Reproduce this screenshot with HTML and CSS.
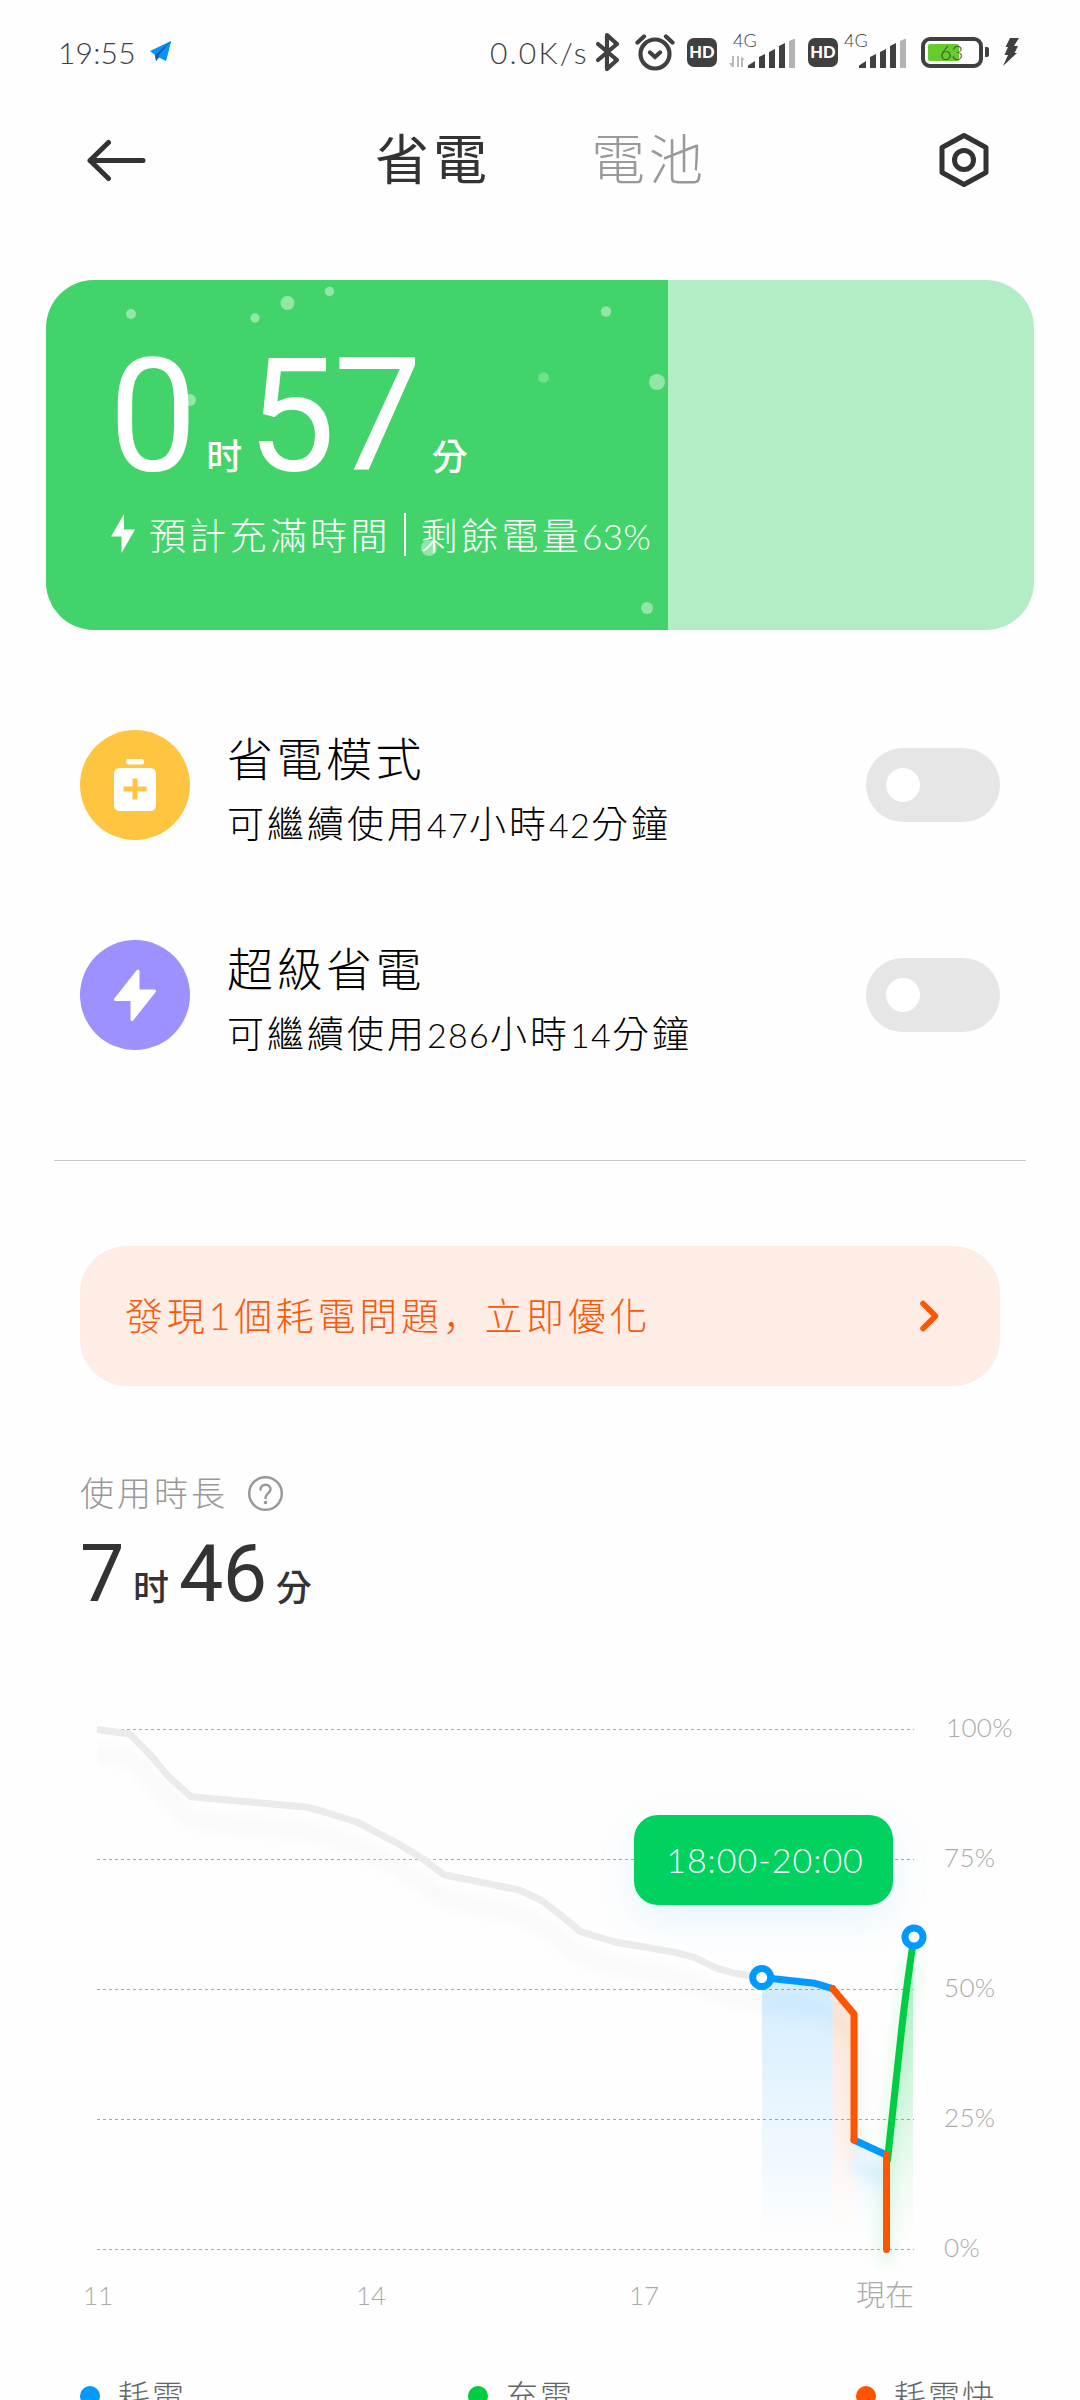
FILE: index.html
```html
<!DOCTYPE html>
<html lang="zh-Hant">
<head>
    <meta charset="UTF-8">
    <meta name="viewport" content="width=device-width, initial-scale=1.0">
    <title>省電</title>
    <link rel="stylesheet" href="styles.css">
</head>
<body>
    <div class="status-bar">
        <span class="clock">19:55</span>
        <svg class="telegram" width="22" height="22" viewBox="0 0 22 22">
            <path d="M21 0L0 10l5 4 1 6 3-3.500 7 3.500z" fill="#0a93f5"/>
            <path d="M21 0L5 14l1 6 3-4z" fill="#0a5fb8"/>
            <path d="M21 0L8.500 14.500l7.500 5z" fill="#0a93f5"/>
        </svg>
        <span class="speed">0.0K/s</span>
        <svg class="bluetooth" width="26" height="40" viewBox="0 0 26 40" fill="none" stroke="#404040" stroke-width="4.200" stroke-linejoin="round" stroke-linecap="round">
            <path d="M3 12l19 16-10 9V3l10 9L3 28"/>
        </svg>
        <svg class="alarm" width="40" height="40" viewBox="0 0 40 40" fill="none" stroke="#404040" stroke-width="4.200" stroke-linecap="round">
            <circle cx="20" cy="22" r="14.500"/>
            <path d="M15 20.500l5 4.500 5-4.500M2.500 10.500l6.500-6M37.500 10.500l-6.500-6"/>
        </svg>
        <span class="hd">HD</span>
        <svg class="signal" width="68" height="52" viewBox="0 -8 68 52">
            <text x="4" y="13" class="net">4G</text>
            <path d="M5 22v11H3l-3-4h3v-7zM8 22v11h2V22zM12 33V22l4 4h-2v7z" fill="#bbb"/>
            <path d="M19 31.500l7-4.500v7h-7zM30 23l6-3v14h-6zM40 18l6-3v19h-6zM50 12l6-3v25h-6z" fill="#404040"/>
            <path d="M60 7l6-2.500V34h-6z" fill="#b3b3b3"/>
        </svg>
        <span class="hd hd-second">HD</span>
        <svg class="signal signal-second" width="66" height="52" viewBox="0 -8 66 52">
            <text x="1" y="13" class="net">4G</text>
            <path d="M16 31.500l7-4.500v7h-7zM27 23l6-3v14h-6zM37 18l6-3v19h-6zM47 12l6-3v25h-6z" fill="#404040"/>
            <path d="M57 7l6-2.500V34h-6z" fill="#b3b3b3"/>
        </svg>
        <div class="battery"><div class="battery-fill"></div><span>63</span></div>
        <div class="battery-nub"></div>
        <svg class="charging" width="18" height="30" viewBox="0 0 18 30">
            <path d="M8 1h9l-5 8h4l-3.500 7H15L1 29l5-11H2.500L6 10H3.500z" fill="#404040"/>
        </svg>
    </div>

    <header class="header">
        <svg class="back" width="62" height="44" viewBox="0 0 62 44" fill="none" stroke="#333" stroke-width="5" stroke-linecap="round" stroke-linejoin="round">
            <path d="M57 22.500H4M22.500 4.500L4 22.500l18.500 18"/>
        </svg>
        <nav class="tabs">
            <span class="tab active">省電</span>
            <span class="tab">電池</span>
        </nav>
        <svg class="settings" width="54" height="58" viewBox="0 0 54 58" fill="none" stroke="#333" stroke-width="5" stroke-linejoin="round">
            <path d="M27 4.500L49 16.500v25L27 53.500 5 41.500v-25z"/>
            <circle cx="27" cy="29" r="9.500"/>
        </svg>
    </header>

    <section class="charge-card">
        <div class="charge-level" style="width: 63%"></div>
        <svg class="bubbles" width="988" height="350" viewBox="0 0 988 350" fill="#fff">
            <g fill-opacity="0.420">
                <circle cx="85" cy="34" r="5"/>
                <circle cx="241.500" cy="23" r="7"/>
                <circle cx="283.500" cy="11.500" r="4.700"/>
                <circle cx="209" cy="38" r="4.700"/>
                <circle cx="560" cy="31.500" r="5.200"/>
                <circle cx="611" cy="102" r="8"/>
                <circle cx="144" cy="120" r="6"/>
                <circle cx="383" cy="268" r="8"/>
                <circle cx="601" cy="328" r="6"/>
            </g>
            <circle cx="497.500" cy="97.500" r="5.300" fill-opacity="0.250"/>
        </svg>
        <div class="charge-content">
            <div class="charge-time">
                <span class="big">0</span><span class="unit">时</span><span class="big">57</span><span class="unit unit-min">分</span>
            </div>
            <div class="charge-info">
                <svg width="26" height="40" viewBox="0 0 26 40"><path d="M14 0v15.500h11L11.500 39V22.500H1z" fill="#fff"/></svg>
                <span class="estimate">預計充滿時間</span>
                <i></i>
                <span>剩餘電量<b>63%</b></span>
            </div>
        </div>
    </section>

    <section class="modes">
        <div class="mode">
            <svg width="110" height="110" viewBox="0 0 110 110">
                <circle cx="55" cy="55" r="55" fill="#ffc540"/>
                <rect x="46" y="29" width="18" height="5.500" rx="2" fill="#fff"/>
                <rect x="34" y="38" width="42" height="43" rx="5.500" fill="#fff"/>
                <path d="M55 51v16M46 59h18" stroke="#ffc540" stroke-width="5" stroke-linecap="square"/>
            </svg>
            <div class="mode-text">
                <h2>省電模式</h2>
                <p>可繼續使用<b>47</b>小時<b>42</b>分鐘</p>
            </div>
            <div class="switch"></div>
        </div>
        <div class="mode">
            <svg width="110" height="110" viewBox="0 0 110 110">
                <circle cx="55" cy="55" r="55" fill="#9c91ff"/>
                <path d="M58 31v20h16.500L52 79.500V59.500H35.500z" fill="#fff" stroke="#fff" stroke-width="3" stroke-linejoin="round"/>
            </svg>
            <div class="mode-text">
                <h2>超級省電</h2>
                <p>可繼續使用<b>286</b>小時<b>14</b>分鐘</p>
            </div>
            <div class="switch"></div>
        </div>
    </section>

    <hr>

    <div class="alert">
        <span>發現<b>1</b>個耗電問題<span class="comma" lang="zh-Hans">，</span>立即優化</span>
        <svg width="24" height="36" viewBox="0 0 24 36" fill="none" stroke="#ff5500" stroke-width="5.500" stroke-linecap="round" stroke-linejoin="round">
            <path d="M5 5.500L17.500 18 5 30.500"/>
        </svg>
    </div>

    <section class="usage">
        <div class="usage-label">
            <span>使用時長</span>
            <svg width="37" height="37" viewBox="0 0 37 37" fill="none" stroke="#999" stroke-width="2.500">
                <circle cx="18.500" cy="18.500" r="16.300"/>
                <path d="M13.500 14.500c0-6.500 10-6.500 10 0 0 3.500-5 4-5 8.500" stroke-linecap="round"/>
                <circle cx="18.500" cy="27.500" r="1.800" fill="#999" stroke="none"/>
            </svg>
        </div>
        <div class="usage-time">
            <span class="big">7</span><span class="unit">时</span><span class="big">46</span><span class="unit">分</span>
        </div>
    </section>

    <section class="chart">
        <svg class="plot" width="850" height="600" viewBox="80 1700 850 600" fill="none">
            <defs>
                <linearGradient id="fillBlue" gradientUnits="userSpaceOnUse" x1="0" y1="1977" x2="0" y2="2240">
                    <stop offset="0" stop-color="#0099ff" stop-opacity="0.170"/>
                    <stop offset="1" stop-color="#0099ff" stop-opacity="0"/>
                </linearGradient>
                <linearGradient id="fillOrange" gradientUnits="userSpaceOnUse" x1="0" y1="1985" x2="0" y2="2240">
                    <stop offset="0" stop-color="#ff5500" stop-opacity="0.150"/>
                    <stop offset="1" stop-color="#ff5500" stop-opacity="0"/>
                </linearGradient>
                <linearGradient id="fillGreen" gradientUnits="userSpaceOnUse" x1="0" y1="1937" x2="0" y2="2240">
                    <stop offset="0" stop-color="#00cc44" stop-opacity="0.280"/>
                    <stop offset="1" stop-color="#00cc44" stop-opacity="0"/>
                </linearGradient>
                <filter id="blur" filterUnits="userSpaceOnUse" x="97" y="1700" width="840" height="600">
                    <feGaussianBlur stdDeviation="8"/>
                </filter>
            </defs>
            <!-- grid -->
            <path d="M97 1729.500h817M97 1859.500h817M97 1989.500h817M97 2119.500h817M97 2249.500h817" stroke="#a6a6a6" stroke-dasharray="3 3"/>
            <!-- line shadows -->
            <g filter="url(#blur)" stroke-width="10">
                <path d="M80 1752L130 1758l20 20 19 23 22 20 115 10 21 6 31 10 19 10 21 11 23 14 22 17 75 15 22 10 19 14 21 18 34 10 60 11 20 6 20 9 20 6 27 4" stroke="#e0e0e0" stroke-opacity="0.300"/>
                <path d="M762 2002l53 6 18 6" stroke="#0099ff" stroke-opacity="0.100"/>
                <path d="M833 2014l21 25v120" stroke="#7a9a50" stroke-opacity="0.120"/>
                <path d="M854 2165l32 15" stroke="#0099ff" stroke-opacity="0.150"/>
                <path d="M912 1960L886 2180v82" stroke="#00cc44" stroke-opacity="0.180"/>
            </g>
            <!-- areas -->
            <path d="M762 1977.500l53 6 17.700 5.500v251H762z" fill="url(#fillBlue)"/>
            <path d="M832.700 1989L854 2014v226h-21.300z" fill="url(#fillOrange)"/>
            <path d="M854 2140l32.500 15v85H854z" fill="url(#fillBlue)"/>
            <path d="M913 1937l-12 85-12.500 133v85H913z" fill="url(#fillGreen)"/>
            <!-- battery level -->
            <path d="M97 1729.500L129.700 1734l20.300 20.500 19 22.500 22.300 19.800L306 1807l20.700 5.500 31.800 10.200 19.100 10.300 21.100 11 22.900 14 22.200 16.700L519 1890l22 10 18.400 14 21.100 17.700L615 1942l60 10.300 20 5.400 20 10 20 5.600 27 4.200" stroke="#ebebeb" stroke-width="7" stroke-linejoin="round"/>
            <g stroke-width="7" stroke-linecap="round" stroke-linejoin="round">
                <path d="M762 1977.500l53 5.800 17.700 5.400M854 2140l32.500 15" stroke="#0099ff"/>
                <path d="M914 1937q-9 60-13 98L887.500 2160" stroke="#00cc44"/>
                <path d="M832.700 1988.700L854 2014v126M886.500 2155v94.500" stroke="#ff5500"/>
            </g>
            <g fill="#fff" stroke="#0099ff" stroke-width="7">
                <circle cx="761.700" cy="1977.500" r="9"/>
                <circle cx="914" cy="1937" r="9"/>
            </g>
        </svg>
        <div class="y-axis">
            <span class="full">100%</span><span>75%</span><span>50%</span><span>25%</span><span>0%</span>
        </div>
        <div class="tooltip">18:00-20:00</div>
    </section>
    <div class="x-axis"><span>11</span><span>14</span><span>17</span><span class="now">現在</span></div>

    <div class="legend">
        <div><i class="dot blue"></i>耗電</div>
        <div><i class="dot green"></i>充電</div>
        <div><i class="dot orange"></i>耗電快</div>
    </div>
</body>
</html>
```
FILE: styles.css
```css
* {
    box-sizing: border-box;
}
body {
    margin: 0;
    width: 1080px;
    height: 2400px;
    overflow: hidden;
    background-color: #fefefe;
    color: #333;
    font-family: Lato, "Noto Sans CJK TC", sans-serif;
    font-weight: 300;
}
h2, p {
    margin: 0;
    font-weight: 300;
}
b {
    font-weight: 300;
}
svg {
    display: block;
    flex: none;
}

/* status bar */
.status-bar {
    display: flex;
    align-items: center;
    height: 104px;
    padding-left: 58px;
    color: #404040;
    font-size: 30px;
    white-space: nowrap;
}
.clock {
    width: 92px;
    letter-spacing: 0.2px;
}
.telegram {
    width: 22px;
}
.speed {
    width: 97px;
    margin-left: 318px;
    letter-spacing: 2.2px;
}
.bluetooth {
    margin-left: 8px;
}
.alarm {
    margin-left: 14px;
}
.hd {
    width: 30px;
    height: 29px;
    margin-left: 12px;
    border-radius: 7px;
    background-color: #404040;
    color: #fff;
    font-size: 16.5px;
    font-weight: 900;
    line-height: 29px;
    text-align: center;
}
.signal {
    margin-left: 12px;
}
.hd-second {
    margin-left: 11px;
}
.signal-second {
    margin-left: 5px;
}
.net {
    font-size: 18px;
    fill: #404040;
}
.battery {
    display: flex;
    position: relative;
    width: 62px;
    height: 31px;
    margin-left: 12px;
    padding: 3px;
    border: 4px solid #404040;
    border-radius: 9px;
}
.battery-fill {
    width: 31px;
    height: 17px;
    border-radius: 2px;
    background-color: #66cc2b;
}
.battery span {
    position: absolute;
    left: 15px;
    top: 0;
    font-size: 20px;
    line-height: 22px;
}
.battery-nub {
    width: 4px;
    height: 10px;
    margin-left: 2px;
    border-radius: 0 2px 2px 0;
    background-color: #404040;
}
.charging {
    margin-left: 13px;
}

/* header */
.header {
    display: flex;
    align-items: center;
    height: 112px;
    padding: 0 89px 0 86px;
}
.tabs {
    display: flex;
    flex: 1;
    gap: 100px;
    margin-left: 227px;
}
.tab {
    font-size: 54px;
    line-height: 60px;
    letter-spacing: 4px;
    color: #999;
}
.tab.active {
    color: #333;
    font-weight: 400;
}

/* charging card */
.charge-card {
    position: relative;
    width: 988px;
    height: 350px;
    margin: 64px 46px 0;
    overflow: hidden;
    border-radius: 48px;
    background-color: #b3edc5;
    color: #fff;
}
.charge-level {
    position: absolute;
    left: 0;
    top: 0;
    height: 100%;
    background-color: #42d46a;
}
.bubbles {
    position: absolute;
    left: 0;
    top: 0;
}
.charge-content {
    position: relative;
    padding: 56px 0 0 63px;
}
.charge-time {
    display: flex;
    align-items: baseline;
    height: 175px;
    line-height: 160px;
}
.charge-time .big {
    font-size: 157px;
    letter-spacing: -2px;
}
.big {
    font-family: Roboto, sans-serif;
    font-weight: 400;
}
.unit {
    font-family: "Noto Sans CJK SC", sans-serif;
    font-weight: 500;
    font-size: 36px;
}
.charge-time .unit {
    width: 36px;
    margin: 0 5px 0 11px;
}
.charge-time .unit-min {
    margin-left: 12px;
}
.charge-info {
    display: flex;
    align-items: center;
    height: 46px;
    padding-left: 1px;
    font-size: 37px;
    letter-spacing: 3.3px;
    white-space: nowrap;
}
.charge-info .estimate {
    margin-left: 13px;
}
.charge-info i {
    width: 2px;
    height: 43px;
    margin: 0 15px 0 13px;
    background-color: #fff;
}
.charge-info b {
    font-size: 35px;
    letter-spacing: 0.5px;
}

/* saving modes */
.modes {
    padding: 100px 80px 0;
}
.mode {
    display: flex;
    align-items: center;
    height: 110px;
    margin-bottom: 100px;
}
.mode-text {
    flex: 1;
    margin-left: 37px;
    padding-top: 14px;
    color: #000;
}
.mode-text h2 {
    font-size: 46px;
    line-height: 64px;
    letter-spacing: 3.5px;
}
.mode-text p {
    font-size: 37px;
    line-height: 66px;
    letter-spacing: 3px;
}
.mode-text b {
    font-size: 34px;
    letter-spacing: 1.3px;
}
.switch {
    width: 134px;
    height: 74px;
    padding: 20px;
    border-radius: 37px;
    background-color: #e6e6e6;
}
.switch::before {
    content: "";
    display: block;
    width: 34px;
    height: 34px;
    border-radius: 50%;
    background-color: #fff;
}
hr {
    height: 1px;
    margin: 110px 54px 0;
    border: 0;
    background-color: #c8c8c8;
}

/* power issue */
.alert {
    display: flex;
    align-items: center;
    justify-content: space-between;
    height: 140px;
    margin: 85px 80px 0;
    padding: 0 58px 0 45px;
    border-radius: 47px;
    background-color: #feede5;
    color: #f55a0f;
    font-size: 38px;
    letter-spacing: 3.7px;
}
.alert > span {
    padding-bottom: 5px;
}
.comma {
    font-family: "Noto Sans CJK SC", sans-serif;
    line-height: 1;
}

/* usage */
.usage {
    height: 314px;
    padding: 82px 80px 0;
}
.usage-label {
    display: flex;
    align-items: center;
    gap: 19px;
    height: 50px;
    color: #999;
    font-size: 34px;
    letter-spacing: 3px;
}
.usage-label span {
    padding-bottom: 3px;
}
.usage-time {
    display: flex;
    align-items: baseline;
    padding-top: 6px;
    line-height: 100px;
}
.usage-time .big {
    font-size: 79px;
    letter-spacing: -0.5px;
}
.usage-time .unit {
    margin: 0 10px 0 9px;
}

/* chart */
.chart {
    position: relative;
    display: flex;
    height: 580px;
    padding-left: 80px;
}
.y-axis {
    display: flex;
    flex-direction: column;
    justify-content: space-between;
    height: 550px;
    margin: 12px 0 0 14px;
    color: #aaa;
    font-size: 26px;
    line-height: 30px;
    letter-spacing: 0.3px;
}
.y-axis .full {
    padding-left: 2px;
}
.tooltip {
    position: absolute;
    left: 634px;
    top: 115px;
    width: 259px;
    height: 90px;
    border-radius: 24px;
    background-color: #00d15f;
    box-shadow: 0 14px 40px rgba(0, 153, 255, 0.1);
    color: #fff;
    font-size: 34px;
    line-height: 89px;
    letter-spacing: 1px;
    text-indent: 3px;
    text-align: center;
}
.x-axis {
    display: grid;
    grid-template-columns: 273px 273px 1fr auto;
    padding: 0 166px 0 83px;
    color: #aaa;
    font-size: 26px;
    line-height: 30px;
}
.now {
    font-size: 29px;
}

/* legend */
.legend {
    display: grid;
    grid-template-columns: 388px 388px auto;
    padding: 66px 0 0 80px;
    color: #666;
    font-size: 32px;
    line-height: 40px;
    letter-spacing: 2px;
    white-space: nowrap;
}
.legend div {
    display: flex;
    align-items: center;
}
.dot {
    width: 20px;
    height: 20px;
    margin-right: 18px;
    border-radius: 50%;
}
.blue {
    background-color: #0099ff;
}
.green {
    background-color: #00cc44;
}
.orange {
    background-color: #ff5500;
}
```
